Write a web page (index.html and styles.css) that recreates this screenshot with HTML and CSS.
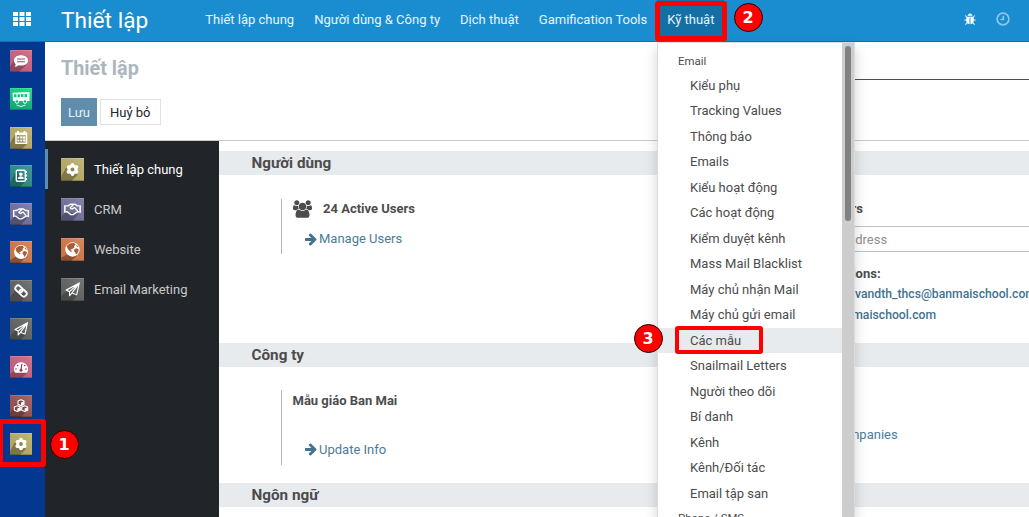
FILE: index.html
```html
<!DOCTYPE html>
<html lang="vi">
<head>
<meta charset="utf-8">
<title>Thiết lập</title>
<link rel="stylesheet" href="styles.css">
</head>
<body>
<svg class="defs" width="0" height="0">
  <defs>
    <linearGradient id="shine" x1="0" y1="1" x2="1" y2="0"><stop offset="0" stop-color="#000" stop-opacity=".05"/><stop offset="1" stop-color="#fff" stop-opacity=".14"/></linearGradient>
    <g id="base"><rect width="22" height="22" fill="url(#shine)"/><path d="M0 .5h22" stroke="#fff" stroke-opacity=".15"/><path d="M0 21.500h22" stroke="#000" stroke-opacity=".2"/></g>
    <symbol id="chat" viewBox="0 0 22 22"><path d="M0 17L6 7l10 8-7 7H0z" fill="#000" opacity=".25"/><path d="M11 5.300c4 0 7 2.200 7 5.100s-3 5.100-7 5.100c-.8 0-1.600-.1-2.300-.3-1.300 1-2.700 1.500-4.200 1.500.8-.7 1.200-1.500 1.200-2.500C4.600 13.200 4 11.900 4 10.400c0-2.900 3-5.100 7-5.100z" fill="#fff"/><path d="M7 9h8M7 11.700h8" stroke="#9c4a66" stroke-width="1.100"/></symbol>
    <symbol id="bus" viewBox="0 0 22 22"><path d="M2.500 4.800L19.500 4v9H3z" fill="#fff"/><path d="M4 6.300h2.500v3H4zM7.500 6.200H10v3H7.500zM11 6.100h2.500v3H11zM14.500 6H17v3h-2.500z" fill="#0bcf80"/><circle cx="7" cy="13.500" r="1.800" fill="#0bb875" stroke="#fff"/><circle cx="15" cy="13.500" r="1.800" fill="#0bb875" stroke="#fff"/><path d="M6.500 17q4.500 3 9 0" fill="none" stroke="#fff" stroke-width=".9"/></symbol>
    <symbol id="calendar" viewBox="0 0 22 22"><path d="M0 16L6 6l11 11-5 5H0z" fill="#000" opacity=".28"/><path d="M6 6.300h10.500v10H6z" fill="none" stroke="#fff" stroke-width="1.500"/><path d="M5.500 7h11.500M8 4v3M14.500 4v3" stroke="#fff" stroke-width="1.800"/><path d="M7.300 10.500h7.900M7.300 13.400h7.900" stroke="#fff" stroke-width="2" stroke-dasharray="2.100 .8"/></symbol>
    <symbol id="contacts" viewBox="0 0 22 22"><path d="M0 18L6 6l10 10-6 6H0z" fill="#000" opacity=".25"/><rect x="6.300" y="5.300" width="9" height="11" rx="1" fill="none" stroke="#fff" stroke-width="1.400"/><circle cx="10.800" cy="9.300" r="1.800" fill="#fff"/><path d="M7.800 14c0-3.600 6-3.600 6 0zM16 6h1v2h-1zM16 9.500h1v2h-1zM16 13h1v2h-1z" fill="#fff"/></symbol>
    <symbol id="shake" viewBox="0 0 22 22"><path d="M0 18l5-5 12 2-6 7H0z" fill="#000" opacity=".25"/><path d="M3.700 7v7M18.300 7v7" stroke="#fff" stroke-width="1.500"/><path d="M4.500 7.500h2.300L9 6h4.500l2 1.500h2M4.500 13.200H6l3.400 2.700h2.200l4.200-2.700h1.800M11.800 6.500L8.800 9.300c.6 1.400 2 1.500 3.200.2l1.200-.3 2.800 3.400" fill="none" stroke="#fff" stroke-width="1.300" stroke-linejoin="round"/></symbol>
    <symbol id="globe" viewBox="0 0 22 22"><path d="M0 19l7-4 8 2-5 5H0z" fill="#000" opacity=".3"/><circle cx="11" cy="11" r="6.900" fill="#fff"/><path d="M6.500 6.500L9 5l3.500-.3 1.500 1.600-1.500 1.500.3 1.500-2.500 1.500-1.300.5 1.600 1.400-1 .6-3-2.600-1-2.500zM12.800 10.800l2-.9 1.800.8.300 1.500-1.200 2.300-1.400 1.400-.6-2-1.200-1.300zM14.500 6.500l1.500.8.800 1.500-1.600-.5z" fill="#a85c3a"/></symbol>
    <symbol id="link" viewBox="0 0 22 22"><path d="M0 17l6-7 11 5-6 7H0z" fill="#000" opacity=".2"/><g fill="none" stroke="#fff" stroke-width="1.800" transform="rotate(43 11 11)"><rect x="4.300" y="8.200" width="7.800" height="5.600" rx="2.600"/><rect x="9.900" y="8.200" width="7.800" height="5.600" rx="2.600"/></g></symbol>
    <symbol id="plane" viewBox="0 0 22 22"><path d="M0 18l6-6 11 3-6 7H0z" fill="#000" opacity=".22"/><path d="M17.500 4.700L5 11.600l3.200 1.500v3.800l2.200-2.500 4.600 1.700zM8.200 13.100l9.300-8.400-7.100 9.700" fill="none" stroke="#fff" stroke-width="1.100" stroke-linejoin="round"/></symbol>
    <symbol id="gauge" viewBox="0 0 22 22"><path d="M0 18l5-4 13 2-6 6H0z" fill="#000" opacity=".25"/><path d="M4 13.200a7 7 0 0 1 14 0c0 1.400-.4 2.500-1 3.500H5c-.6-1-1-2.100-1-3.500z" fill="#fff"/><path d="M11.800 8l-.7 6" stroke="#a33b60" stroke-width="1.300"/><g fill="#a33b60"><circle cx="11" cy="14.300" r="1.500"/><circle cx="6" cy="13" r=".8"/><circle cx="7.500" cy="9.500" r=".8"/><circle cx="14.700" cy="9.500" r=".8"/><circle cx="16" cy="13" r=".8"/></g></symbol>
    <symbol id="cubes" viewBox="0 0 22 22"><path d="M0 18l6-9 11 7-6 6H0z" fill="#000" opacity=".25"/><g stroke="#fff" stroke-width="1.100" stroke-linejoin="round" fill="#834644"><path d="M11 4.800l3 1.200v3.300l-3 1.400-3-1.400V6z"/><path d="M7.300 10.700l3 1.200v3.300l-3 1.400-3-1.400v-3.300zM14.700 10.700l3 1.200v3.300l-3 1.400-3-1.400v-3.300z"/></g><path d="M11 7.500l3-1.300v3.200l-3 1.300zM7.300 13.400l3-1.300v3.200l-3 1.300zM14.700 13.400l3-1.300v3.200l-3 1.300z" fill="#fff"/></symbol>
    <symbol id="cog" viewBox="0 0 22 22"><path d="M0 18L6 7l10 9-6 6H0z" fill="#000" opacity=".28"/><g stroke="#fff" stroke-width="3.600" stroke-linecap="round"><path d="M11 6.600v8.800M7.200 8.800l7.600 4.400M14.800 8.800l-7.600 4.400"/></g><circle cx="11" cy="11" r="4.800" fill="#fff"/><circle cx="11" cy="11" r="1.900" fill="#8f874e"/></symbol>
    <symbol id="arrow" viewBox="0 0 1536 1792"><path d="M1472 960q0 54-37 91l-651 651q-39 37-91 37-51 0-90-37l-75-75q-38-38-38-91t38-91l293-293h-704q-52 0-84.500-37.500t-32.500-90.500v-128q0-53 32.500-90.500t84.500-37.500h704l-293-294q-38-36-38-90t38-90l75-75q38-38 90-38 53 0 91 38l651 651q37 35 37 90z"/></symbol>
  </defs>
</svg>

<header class="topbar">
  <svg class="apps" viewBox="0 0 18 14"><path d="M0 0h5v4H0zM6.500 0h5v4h-5zM13 0h5v4h-5zM0 5h5v4H0zM6.500 5h5v4h-5zM13 5h5v4h-5zM0 10h5v4H0zM6.500 10h5v4h-5zM13 10h5v4h-5z"/></svg>
  <div class="brand">Thiết lập</div>
  <nav class="nav">
    <a>Thiết lập chung</a><a>Người dùng &amp; Công ty</a><a>Dịch thuật</a><a>Gamification Tools</a><a class="active">Kỹ thuật</a>
  </nav>
  <div class="systray">
    <svg class="bug" viewBox="96 0 1600 1792"><path d="M1696 960q0 26-19 45t-45 19h-224q0 171-67 290l208 209q19 19 19 45t-19 45q-18 19-45 19t-45-19l-198-197q-5 5-15 13t-42 28.500-65 36.500-82 29-97 13v-896h-128v896q-51 0-101.500-13.500t-87-33-66-39-43.500-32.500l-15-14-183 207q-20 21-48 21-24 0-43-16-19-18-20.500-44.500t15.500-46.500l202-227q-58-114-58-274h-224q-26 0-45-19t-19-45 19-45 45-19h224v-294l-173-173q-19-19-19-45t19-45 45-19 45 19l173 173h844l173-173q19-19 45-19t45 19 19 45-19 45l-173 173v294h224q26 0 45 19t19 45zm-480-576h-640q0-133 93.500-226.500t226.500-93.500 226.500 93.500 93.500 226.500z"/></svg>
    <svg class="clock" viewBox="0 0 14 14"><circle cx="7" cy="7" r="5.900"/><path d="M7.300 3.700v3.800H4.500"/></svg>
  </div>
</header>

<div class="shell">
  <aside class="rail">
    <svg class="c-pink"><use href="#base"/><use href="#chat"/></svg>
    <svg class="c-green"><use href="#base"/><use href="#bus"/></svg>
    <svg class="c-olive"><use href="#base"/><use href="#calendar"/></svg>
    <svg class="c-teal"><use href="#base"/><use href="#contacts"/></svg>
    <svg class="c-violet"><use href="#base"/><use href="#shake"/></svg>
    <svg class="c-orange"><use href="#base"/><use href="#globe"/></svg>
    <svg class="c-grey"><use href="#base"/><use href="#link"/></svg>
    <svg class="c-grey"><use href="#base"/><use href="#plane"/></svg>
    <svg class="c-pink"><use href="#base"/><use href="#gauge"/></svg>
    <svg class="c-maroon"><use href="#base"/><use href="#cubes"/></svg>
    <svg class="c-olive"><use href="#base"/><use href="#cog"/></svg>
  </aside>

  <main class="main">
    <div class="panel">
      <div class="panel-left">
        <h1>Thiết lập</h1>
        <div class="buttons"><button class="btn primary">Lưu</button><button class="btn">Huỷ bỏ</button></div>
      </div>
      <div class="search"></div>
    </div>
    <div class="content">
      <div class="tabs">
        <div class="tab selected"><svg class="c-olive" viewBox="0 0 22 22"><use href="#base"/><use href="#cog"/></svg><span>Thiết lập chung</span></div>
        <div class="tab"><svg class="c-violet" viewBox="0 0 22 22"><use href="#base"/><use href="#shake"/></svg><span>CRM</span></div>
        <div class="tab"><svg class="c-orange" viewBox="0 0 22 22"><use href="#base"/><use href="#globe"/></svg><span>Website</span></div>
        <div class="tab"><svg class="c-grey" viewBox="0 0 22 22"><use href="#base"/><use href="#plane"/></svg><span>Email Marketing</span></div>
      </div>
      <div class="settings">
        <h2>Người dùng</h2>
        <div class="row users">
          <div class="box">
            <div class="line"><svg class="people" viewBox="0 0 1920 1792"><path d="M593 896q-162 5-265 128h-134q-82 0-138-40.500t-56-118.500q0-353 124-353 6 0 43.500 21t97.500 42.500 119 21.500q67 0 133-23-5 37-5 66 0 139 81 256zm1071 637q0 120-73 189.500t-194 69.500h-874q-121 0-194-69.500t-73-189.500q0-53 3.500-103.500t14-109 26.500-108.500 43-97.500 62-81 85.500-53.500 111.500-20q10 0 43 21.500t73 48 107 48 135 21.500 135-21.500 107-48 73-48 43-21.500q61 0 111.500 20t85.500 53.500 62 81 43 97.500 26.500 108.500 14 109 3.500 103.500zm-1024-1277q0 106-75 181t-181 75-181-75-75-181 75-181 181-75 181 75 75 181zm704 384q0 159-112.500 271.500t-271.500 112.500-271.500-112.500-112.500-271.500 112.500-271.500 271.500-112.500 271.500 112.500 112.500 271.500zm576 225q0 78-56 118.500t-138 40.500h-134q-103-123-265-128 81-117 81-256 0-29-5-66 66 23 133 23 59 0 119-21.500t97.500-42.500 43.500-21q124 0 124 353zm-128-609q0 106-75 181t-181 75-181-75-75-181 75-181 181-75 181 75 75 181z"/></svg><b>24 Active Users</b></div>
            <a class="link"><svg class="arrow"><use href="#arrow"/></svg>Manage Users</a>
          </div>
          <div class="side">
            <b class="invite">Invite New Users</b>
            <div class="field">Enter e-mail address</div>
            <b class="pending">Pending Invitations:</b>
            <a class="mail m1">vandth_thcs@banmaischool.com</a>
            <a class="mail m2">banmaischool.com</a>
          </div>
        </div>
        <h2>Công ty</h2>
        <div class="row company">
          <div class="box">
            <b>Mẫu giáo Ban Mai</b>
            <a class="link"><svg class="arrow"><use href="#arrow"/></svg>Update Info</a>
          </div>
          <div class="side"><a class="link manage">Manage Companies</a></div>
        </div>
        <h2>Ngôn ngữ</h2>
      </div>
    </div>
  </main>
</div>

<div class="menu">
  <div class="menu-list">
    <div class="group">Email</div>
    <div>Kiểu phụ</div><div>Tracking Values</div><div>Thông báo</div><div>Emails</div><div>Kiểu hoạt động</div><div>Các hoạt động</div><div>Kiểm duyệt kênh</div><div>Mass Mail Blacklist</div><div>Máy chủ nhận Mail</div><div>Máy chủ gửi email</div><div class="hover">Các mẫu</div><div>Snailmail Letters</div><div>Người theo dõi</div><div>Bí danh</div><div>Kênh</div><div>Kênh/Đối tác</div><div>Email tập san</div>
    <div class="group last">Phone / SMS</div>
  </div>
  <div class="track"><div class="thumb"></div></div>
</div>

<div class="frame f1"></div><div class="frame f2"></div><div class="frame f3"></div>
<div class="step s1">1</div><div class="step s2">2</div><div class="step s3">3</div>
</body>
</html>
```

FILE: styles.css
```css
* { box-sizing: border-box; }
body { margin: 0; width: 1029px; height: 517px; overflow: hidden; position: relative; background: #fff; color: #4c4c4c; font: 13px/19.5px Roboto, "Noto Sans", sans-serif; }
b { font-weight: 700; }
.defs { position: absolute; }

.topbar { height: 42px; display: flex; align-items: stretch; background: #1a8dd1; border-bottom: 1px solid #1470a7; color: #fff; }
.apps { width: 18px; height: 14px; margin: 12px 30px 0 13px; fill: #fff; }
.brand { width: 134.3px; font-size: 22.7px; line-height: 41px; white-space: nowrap; }
.nav { display: flex; color: #e8f4fb; }
.nav a { padding: 0 10px; line-height: 39px; white-space: nowrap; }
.nav .active { background: #146fa5; }
.systray { margin-left: auto; display: flex; padding: 12px 19px 0 0; gap: 20px; }
.bug { width: 12px; height: 13px; fill: #fff; margin-top: 1px; }
.clock { width: 14px; height: 14px; fill: none; stroke: #fff; stroke-width: 1.7; opacity: .5; }

.shell { display: flex; height: 475px; }
.rail { width: 45px; flex: none; background: #033790; padding: 8px 0 0 10px; display: flex; flex-direction: column; gap: 16.3px; }
.rail svg { width: 22px; height: 22px; flex: none; }
.c-pink { background: #cc6180; }
.c-green { background: linear-gradient(#02de7d, #16aa78); }
.c-olive { background: #bbae66; }
.c-teal { background: #278c89; }
.c-violet { background: #71719f; }
.c-orange { background: #d3794a; }
.c-grey { background: #5f6361; }
.c-maroon { background: #9a5252; }

.main { flex: 1; min-width: 0; display: flex; flex-direction: column; }
.panel { height: 99px; flex: none; border-bottom: 1px solid #c9c9c9; display: flex; padding-left: 16px; }
.panel-left { width: 640px; flex: none; }
h1 { margin: 13px 0 0; font-size: 19.8px; line-height: 28px; font-weight: 700; color: #adb5bd; }
.buttons { display: flex; gap: 3px; align-items: center; margin-top: 15px; }
.btn { height: 26px; padding: 1px 9px 0; border: 1px solid #dee2e6; background: #fff; color: #212529; font: inherit; }
.btn.primary { height: 28px; width: 36px; padding: 2px 0 0; border: 0; background: #5f8dab; color: #e9f0f5; }
.search { flex: 1; height: 38px; border-bottom: 1px solid #4c4f5a; }
.content { flex: 1; display: flex; min-height: 0; }
.tabs { width: 174px; flex: none; background: #212529; padding-top: 8px; }
.tab { height: 40px; display: flex; align-items: center; gap: 10px; padding-left: 16px; color: #c8c9ca; }
.tab svg { width: 23px; height: 23px; }
.tab span { padding-top: 2px; }
.tab.selected { border-left: 3px solid #5f8dab; padding-left: 13px; color: #fff; }
.settings { flex: 1; min-width: 0; padding-top: 10px; overflow: hidden; }
h2 { margin: 0; height: 24px; padding-left: 32.5px; background: #e8ebee; font-size: 15.25px; line-height: 24px; font-weight: 700; color: #4c4c4c; }
.row { display: flex; padding: 24px 0 0 62px; }
.row.users { height: 168px; }
.row.company { height: 116px; padding-top: 23px; }
.box { width: 480px; flex: none; border-left: 1px solid #b5b5b5; padding-left: 10.5px; display: flex; flex-direction: column; }
.users .box { height: 55px; }
.company .box { height: 75px; padding-top: 1px; }
.line { display: flex; align-items: center; gap: 11.5px; height: 20px; }
.people { width: 19px; height: 18px; fill: #4c4c4c; }
.link { display: flex; align-items: center; color: #4c7c98; padding-left: 12px; }
.arrow { width: 12px; height: 14px; fill: #437290; margin-right: 2.5px; }
.users .link { margin-top: 10px; }
.company .link { margin-top: 29px; }
.side { flex: 1; min-width: 0; white-space: nowrap; display: flex; flex-direction: column; }
.invite { padding-left: 3.5px; }
.field { border: 1px solid #c2c2c2; border-right: 0; height: 26px; line-height: 26px; padding-left: 7px; margin-top: 7px; color: #919191; }
.pending { margin-top: 12px; padding-left: 3px; }
.mail { color: #437290; font-size: 12.2px; font-weight: 500; line-height: 21px; }
.m1 { padding-left: 94px; margin-top: 1px; }
.m2 { padding-left: 71px; }
.company .manage { margin-top: 35px; padding-left: 21px; }

.menu { position: absolute; left: 657px; top: 42px; width: 198px; height: 475px; display: flex; background: #fff; border: 1px solid #dadde0; border-bottom: 0; box-shadow: 0 6px 12px rgba(0, 0, 0, .175); overflow: hidden; }
.menu-list { flex: 1; padding-top: 4px; }
.menu-list div { height: 25.5px; line-height: 25.5px; padding-left: 32px; white-space: nowrap; }
.menu-list .group { padding: 2px 0 0 20px; font-size: 11.4px; }
.menu-list .last { padding-top: 0; }
.menu-list .hover { background: #e8ebee; }
.track { width: 12px; background: #cdcdcd; padding: 3px; }
.thumb { height: 175px; border-radius: 3px; background: #7f8281; }

.frame { position: absolute; border: 5px solid #f00; border-radius: 3px; }
.f1 { left: -2px; top: 419px; width: 48px; height: 48px; }
.f2 { left: 655px; top: 1px; width: 72px; height: 40px; }
.f3 { left: 675px; top: 326px; width: 88px; height: 28px; border-width: 4px; }
.step { position: absolute; width: 29px; height: 29px; border-radius: 50%; background: #f00; border: 1px solid #200; color: #fff; font: bold 16px/28px "DejaVu Sans", sans-serif; text-align: center; }
.s1 { left: 49.5px; top: 429.5px; }
.s2 { left: 733.5px; top: 2.5px; }
.s3 { left: 633.5px; top: 323.5px; }
```
